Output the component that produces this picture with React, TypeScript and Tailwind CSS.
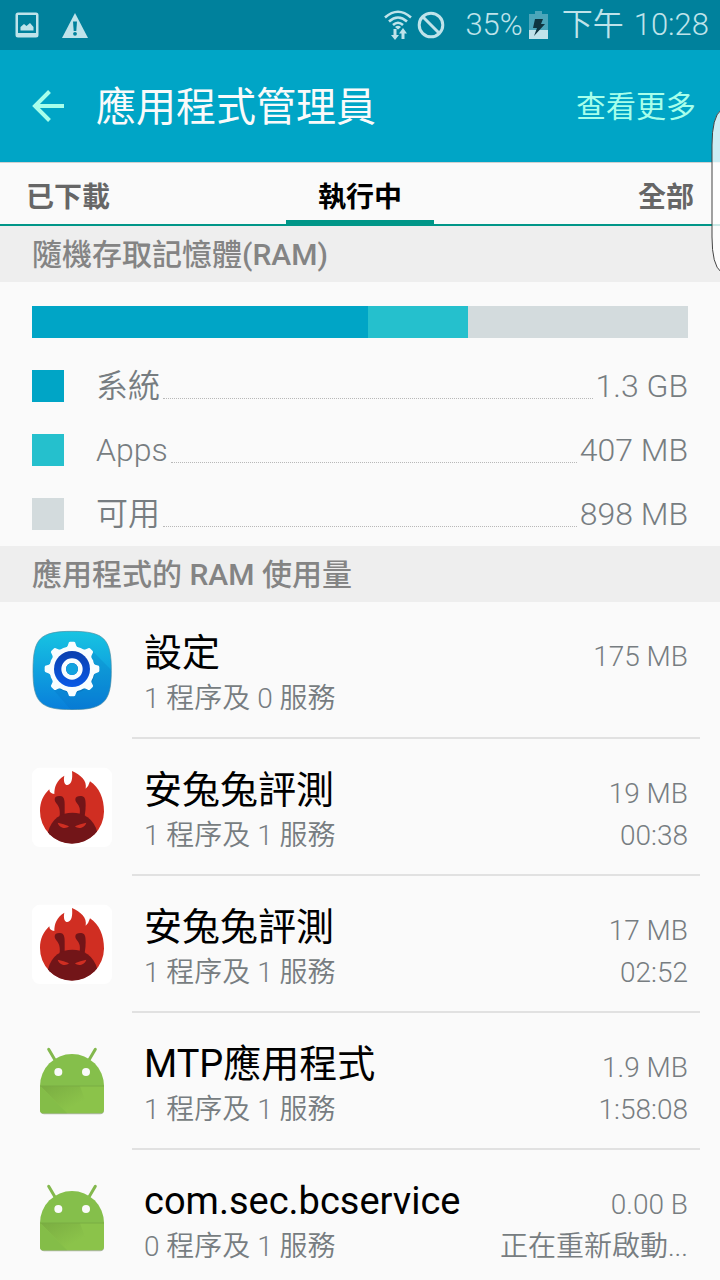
import React from 'react';

type IconName = 'settings' | 'antutu' | 'android';

interface RunningApp {
  icon: IconName;
  name: string;
  detail: string;
  size: string;
  time: string;
}

const memory = [
  { label: '系統', value: '1.3 GB', units: 336, color: 'bg-[#00a5c6]' },
  { label: 'Apps', value: '407 MB', units: 100, color: 'bg-[#25c0cd]' },
  { label: '可用', value: '898 MB', units: 220, color: 'bg-[#d3dbdd]' },
];

const apps: RunningApp[] = [
  { icon: 'settings', name: '設定', detail: '1 程序及 0 服務', size: '175 MB', time: '' },
  { icon: 'antutu', name: '安兔兔評測', detail: '1 程序及 1 服務', size: '19 MB', time: '00:38' },
  { icon: 'antutu', name: '安兔兔評測', detail: '1 程序及 1 服務', size: '17 MB', time: '02:52' },
  { icon: 'android', name: 'MTP應用程式', detail: '1 程序及 1 服務', size: '1.9 MB', time: '1:58:08' },
  { icon: 'android', name: 'com.sec.bcservice', detail: '0 程序及 1 服務', size: '0.00 B', time: '正在重新啟動...' },
];

const SettingsIcon = () => (
  <svg viewBox="36 30 240 240" className="w-20 h-20" aria-hidden="true">
    <defs>
      <linearGradient id="settingsBg" x1="0" y1="0" x2="0" y2="1">
        <stop offset="0" stopColor="#17c4e2" />
        <stop offset="1" stopColor="#087fdb" />
      </linearGradient>
      <linearGradient id="settingsRing" x1="0" y1="0" x2="0" y2="1">
        <stop offset="0" stopColor="#0a3fae" />
        <stop offset="1" stopColor="#0a5ae6" />
      </linearGradient>
      <clipPath id="settingsClip">
        <path d="M156 34C252 34 274 56 274 151S252 269 156 269 39 247 39 151 60 34 156 34Z" />
      </clipPath>
    </defs>
    <path d="M156 34C252 34 274 56 274 151S252 269 156 269 39 247 39 151 60 34 156 34Z" fill="url(#settingsBg)" stroke="#4d8ea3" strokeWidth="2" />
    <g clipPath="url(#settingsClip)">
      <path d="M212 88L290 166V290H170L98 206Z" fill="#0768b8" opacity=".2" />
    </g>
    <circle cx="158" cy="152" r="67" fill="#04579c" opacity=".35" />
    <g fill="#f8fdff">
      <circle cx="156" cy="147" r="68" />
      {[0, 45, 90, 135, 180, 225, 270, 315].map((angle) => (
        <path key={angle} d="M128 90Q142 84 145 72Q146 65 150 65H162Q166 65 167 72Q170 84 184 90Z" transform={`rotate(${angle} 156 147)`} />
      ))}
    </g>
    <circle cx="156" cy="147" r="54" fill="url(#settingsRing)" />
    <circle cx="156" cy="147" r="25" fill="none" stroke="#f8fdff" strokeWidth="14" />
    <circle cx="156" cy="147" r="18" fill="#11a3df" />
  </svg>
);

const AntutuIcon = () => (
  <svg viewBox="36 36 240 240" className="w-20 h-20" aria-hidden="true">
    <defs>
      <clipPath id="antutuClip">
        <circle cx="156" cy="170" r="96" />
      </clipPath>
    </defs>
    <rect x="36" y="38" width="240" height="238" rx="24" fill="#fff" />
    <path
      d="M60 168C60 140 70 120 88 103Q88 116 103 117C103 95 110 76 133 62C129 80 135 90 142 90C156 88 158 70 156 48C182 60 202 76 197 101Q206 94 210 79C238 98 252 130 252 170A96 96 0 0 1 60 168Z"
      fill="#d02e22"
    />
    <g fill="#721518">
      <path d="M104 133C104 124 114 122 124 124C132 126 134 136 134 148V184H119C121 164 117 154 110 146C106 142 104 138 104 133Z" />
      <path d="M166 133C166 124 178 122 187 124C196 126 197 138 197 150Q197 166 194 184H178C182 164 179 154 172 146C168 142 166 138 166 133Z" />
      <path clipPath="url(#antutuClip)" d="M84 232C94 190 125 173 157 173S222 190 232 232L210 270H100Z" />
    </g>
    <path d="M113 203C125 207 137 208 147 214C139 222 119 221 113 203ZM199 203C187 207 175 208 165 214C173 222 193 221 199 203Z" fill="#d02e22" />
  </svg>
);

const AndroidIcon = () => (
  <svg viewBox="36 33 240 240" className="w-20 h-20" aria-hidden="true">
    <defs>
      <linearGradient id="androidShade" x1="0" y1="0" x2="1" y2="1">
        <stop offset="0" stopColor="#6f9f3c" />
        <stop offset=".7" stopColor="#8bc34a" />
      </linearGradient>
    </defs>
    <path d="M61 171H252V241Q252 253 240 253H73Q61 253 61 241Z" fill="#7f8a76" opacity=".6" />
    <path d="M86 58L105 90M226 58L207 90" stroke="#83b84d" strokeWidth="9" strokeLinecap="round" />
    <path d="M60 168A96 96 0 0 1 252 168Z" fill="#85bf4b" />
    <path d="M60 168H252V239Q252 250 241 250H71Q60 250 60 239Z" fill="#8bc34a" />
    <path d="M60 168L142 250H71Q60 250 60 239Z" fill="#84bd48" />
    <path d="M62 169H180L210 250H142Z" fill="url(#androidShade)" opacity=".6" />
    <path d="M60 168H252" stroke="#73a541" strokeWidth="2" />
    <circle cx="115" cy="126" r="12" fill="#fafafa" />
    <circle cx="198" cy="126" r="12" fill="#fafafa" />
  </svg>
);

const icons: Record<IconName, React.FC> = {
  settings: SettingsIcon,
  antutu: AntutuIcon,
  android: AndroidIcon,
};

const StatusBar = () => (
  <div className="flex h-[50px] shrink-0 items-center bg-[#00819c] pl-[15px] pr-[11px] text-[31px] font-[350] text-[#bfe3ea]">
    <svg viewBox="0 0 24 26" className="h-[26px] w-6" aria-hidden="true">
      <path d="M3 .5H21Q23.500 .5 23.500 3V23Q23.500 25.500 21 25.500H3Q.5 25.500 .5 23V3Q.5 .5 3 .5ZM3 3V21H21V3Z" fill="currentColor" fillRule="evenodd" />
      <path d="M5.500 18.500V15L9 12L11.500 14L15 11L18.500 15V18.500Z" fill="currentColor" />
    </svg>
    <svg viewBox="0 0 26 25" className="ml-[23px] h-[25px] w-[26px]" aria-hidden="true">
      <path d="M13 0L26 25H0Z" fill="currentColor" />
      <path d="M11 8.500H15L14.300 18H11.700Z" fill="#00819c" />
      <circle cx="13" cy="20.800" r="1.900" fill="#00819c" />
    </svg>
    <svg viewBox="0 0 28 30" className="ml-auto h-[30px] w-7" aria-hidden="true">
      <g fill="none" stroke="currentColor" strokeWidth="2.600">
        <path d="M1 7.500Q14 -4 27 7.500" />
        <path d="M5 11.500Q14 3.500 23 11.500" />
        <path d="M9 15Q14 10.500 19 15" />
      </g>
      <path d="M11 17Q14 14.500 17 17L14 19.500Z" fill="currentColor" />
      <path d="M9.500 19H12.500V25H15L11 30L7 25H9.500ZM17.500 29H20.500V23.500H23L19 18L15 23.500H17.500Z" fill="currentColor" />
    </svg>
    <svg viewBox="0 0 28 28" className="ml-[5px] h-7 w-7" aria-hidden="true">
      <g fill="none" stroke="currentColor" strokeWidth="3">
        <circle cx="14" cy="14" r="11.800" />
        <path d="M5.500 5.500L22.500 22.500" />
      </g>
    </svg>
    <span className="ml-5">35%</span>
    <svg viewBox="0 0 19 28" className="ml-[6px] h-7 w-[19px]" aria-hidden="true">
      <path d="M6 0H13V3H19V28H0V3H6Z" fill="#4ba6ba" />
      <path d="M0 19H19V28H0Z" fill="currentColor" />
      <path d="M6 8H14L12 13H16L5 25L8 17H4Z" fill="#0e3540" />
    </svg>
    <span className="ml-[14px]">下午</span>
    <span className="ml-[10px]">10:28</span>
  </div>
);

const Header = () => (
  <header className="flex h-28 shrink-0 items-center bg-[#00a5c6] pl-8 pr-6">
    <button type="button" aria-label="返回" className="text-[#a7ffeb]">
      <svg viewBox="0 0 32 32" className="h-8 w-8" fill="none" stroke="currentColor" strokeWidth="4">
        <path d="M32 16H3M17.500 1.500L3 16L17.500 30.500" />
      </svg>
    </button>
    <h1 className="ml-8 pt-1 text-[40px] text-[#fafafa]">應用程式管理員</h1>
    <button type="button" className="ml-auto text-[30px] text-[#a7ffeb]">查看更多</button>
  </header>
);

const Tabs = () => (
  <div role="tablist" className="grid h-16 shrink-0 grid-cols-3 border-b-2 border-t border-b-[#009688] border-t-[#d0d0d0] px-[26px] text-[28px] font-bold text-[#666]">
    <button type="button" role="tab" aria-selected="false" className="border-b-4 border-transparent pt-3 text-left">已下載</button>
    <button type="button" role="tab" aria-selected="true" className="w-[148px] justify-self-center border-b-4 border-[#009688] pt-3 text-black">執行中</button>
    <button type="button" role="tab" aria-selected="false" className="border-b-4 border-transparent pt-3 text-right">全部</button>
  </div>
);

const SectionTitle: React.FC<{ children: React.ReactNode }> = ({ children }) => (
  <h2 className="flex h-14 shrink-0 items-center bg-[#eee] px-8 text-[30px] font-medium text-[#848484]">{children}</h2>
);

const MemoryUsage = () => (
  <div className="px-8 pt-6">
    <div className="mb-4 flex h-8">
      {memory.map((part) => (
        <div key={part.label} className={part.color} style={{ flexGrow: part.units }} />
      ))}
    </div>
    <dl className="text-[32px] font-[350] text-[#777d81]">
      {memory.map((part) => (
        <div key={part.label} className="flex h-16 items-center">
          <span className={`h-8 w-8 ${part.color}`} />
          <dt className="ml-8">{part.label}</dt>
          <span className="mx-[3px] mt-6 flex-1 border-b border-dotted border-[#b8b8b8]" />
          <dd>{part.value}</dd>
        </div>
      ))}
    </dl>
  </div>
);

const AppRow: React.FC<{ app: RunningApp }> = ({ app }) => {
  const Icon = icons[app.icon];

  return (
    <li className="flex h-[137px] pl-8">
      <div className="pt-7">
        <Icon />
      </div>
      <div className="mx-5 grid flex-1 grid-cols-[1fr_auto] content-start items-baseline border-b-2 border-[#e1e1e1] px-3 pt-[29px] text-[28px] font-[350] leading-[42px] text-[#777d81]">
        <h3 className="text-[38px] font-normal leading-[44px] text-black">{app.name}</h3>
        <span className="text-right">{app.size}</span>
        <p>{app.detail}</p>
        <span className="text-right">{app.time}</span>
      </div>
    </li>
  );
};

const App: React.FC = () => {
  return (
    <div className="relative flex h-screen flex-col overflow-hidden bg-[#fafafa] font-[Roboto,'Noto_Sans_CJK_TC',sans-serif]">
      <StatusBar />
      <Header />
      <Tabs />
      <main className="min-h-0 flex-1 overflow-hidden">
        <SectionTitle>隨機存取記憶體(RAM)</SectionTitle>
        <MemoryUsage />
        <SectionTitle>應用程式的 RAM 使用量</SectionTitle>
        <ul>
          {apps.map((app, index) => (
            <AppRow key={index} app={app} />
          ))}
        </ul>
      </main>

      {/* Edge panel handle */}
      <svg viewBox="0 0 9 164" className="absolute right-0 top-[109px] h-[164px] w-[9px]" aria-hidden="true">
        <path d="M10 1Q1 8 1 36V128Q1 156 10 163Z" fill="#fff" fillOpacity=".8" stroke="#444" strokeWidth="1" />
      </svg>
    </div>
  );
};

export default App;
